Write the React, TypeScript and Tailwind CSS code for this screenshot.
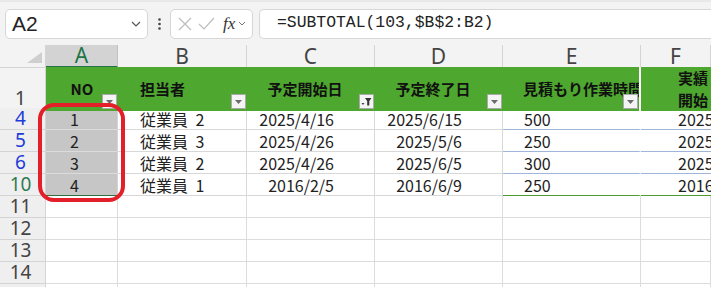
import React from 'react';

const GRID = 'grid grid-cols-[46px_72px_129px_128px_128px_138px_1fr]';
const CJK = "font-['Noto_Sans_CJK_JP',sans-serif]";
const HDR = "font-['Noto_Sans','Liberation_Sans',sans-serif]";

type Row = { n: string; color: string; no: string; who: string; start: string; end: string; est: string; f: string; last?: boolean };

const rows: Row[] = [
  { n: '4', color: 'text-[#1d3bd8]', no: '1', who: '従業員 2', start: '2025/4/16', end: '2025/6/15', est: '500', f: '2025' },
  { n: '5', color: 'text-[#1d3bd8]', no: '2', who: '従業員 3', start: '2025/4/26', end: '2025/5/6', est: '250', f: '2025' },
  { n: '6', color: 'text-[#1d3bd8]', no: '3', who: '従業員 2', start: '2025/4/26', end: '2025/6/5', est: '300', f: '2025' },
  { n: '10', color: 'text-[#2f7d52]', no: '4', who: '従業員 1', start: '2016/2/5', end: '2016/6/9', est: '250', f: '2016', last: true },
];

function FilterBtn({ active }: { active?: boolean }) {
  return (
    <span className="absolute right-[1px] bottom-[2px] w-[15px] h-[15px] bg-[#f4f4f4] border border-[#a9a9a9] flex items-center justify-center">
      {active ? (
        <svg width="11" height="9" viewBox="0 0 11 9">
          <path d="M0.5 6h3L2 8z" fill="#444" />
          <path d="M4 1h6.5L8.3 4v4.5H6.2V4z" fill="#333" />
        </svg>
      ) : (
        <svg width="7" height="4" viewBox="0 0 7 4">
          <path d="M0 0h7L3.5 4z" fill="#6b6b6b" />
        </svg>
      )}
    </span>
  );
}

function Toolbar() {
  return (
    <div className="h-[45px] bg-[#f3f3f3] border-t-[2px] border-[#e8e8e8] flex items-center pl-[5px] gap-0">
      <div className="w-[143px] h-[30px] bg-white border border-[#d6d6d6] rounded-[5px] flex items-center justify-between pl-[6px] pr-[6px]">
        <span className="text-[21px] text-[#222] font-['Liberation_Sans',sans-serif] leading-none">A2</span>
        <svg width="10" height="6" viewBox="0 0 10 6">
          <path d="M1 1l4 4 4-4" stroke="#555" strokeWidth="1.2" fill="none" />
        </svg>
      </div>
      <div className="w-[22px] flex justify-center">
        <svg width="3" height="12" viewBox="0 0 3 12">
          <circle cx="1.5" cy="1.5" r="1.3" fill="#444" />
          <circle cx="1.5" cy="6" r="1.3" fill="#444" />
          <circle cx="1.5" cy="10.5" r="1.3" fill="#444" />
        </svg>
      </div>
      <div className="w-[83px] h-[30px] bg-white border border-[#d6d6d6] rounded-[5px] flex items-center pl-[7px] gap-[6px]">
        <svg width="14" height="14" viewBox="0 0 14 14">
          <path d="M1 1l12 12M13 1L1 13" stroke="#bdbdbd" strokeWidth="1.2" />
        </svg>
        <svg width="17" height="13" viewBox="0 0 17 13">
          <path d="M1 7l5 5L16 1" stroke="#bdbdbd" strokeWidth="1.2" fill="none" />
        </svg>
        <span className="text-[17px] italic text-[#333] font-['Liberation_Serif',serif] leading-none ml-[2px]">fx</span>
        <svg width="8" height="5" viewBox="0 0 8 5" className="-ml-[3px]">
          <path d="M1 1l3 3 3-3" stroke="#777" strokeWidth="1" fill="none" />
        </svg>
      </div>
      <div className="flex-1 ml-[6px] h-[30px] bg-white border border-[#d6d6d6] border-r-0 rounded-l-[5px] flex items-center pl-[17px]">
        <span className="text-[16.4px] text-[#222] font-['Liberation_Mono',monospace] leading-none">=SUBTOTAL(103,$B$2:B2)</span>
      </div>
    </div>
  );
}

export default function App() {
  const letters = ['A', 'B', 'C', 'D', 'E', 'F'];
  const emptyRows = ['11', '12', '13', '14', '15'];

  return (
    <div className="w-[711px] h-[287px] overflow-hidden bg-white relative">
      <Toolbar />

      {/* column letters */}
      <div className={`${GRID} h-[22px] ${HDR}`}>
        <div className="bg-[#f3f3f3] border-r border-b border-[#d4d4d4] relative">
          <svg width="15" height="11" viewBox="0 0 15 11" className="absolute right-[3px] bottom-[4px]">
            <path d="M15 0v11H0z" fill="#cfcfcf" />
          </svg>
        </div>
        {letters.map((l, i) => (
          <div
            key={l}
            className={
              i === 0
                ? 'bg-[#d3d3d3] border-b-2 border-[#217346] border-r border-r-[#c2c2c2] flex items-center justify-center text-[21px] text-[#217346] leading-none'
                : 'bg-[#f3f3f3] border-r border-b border-[#d4d4d4] flex items-center justify-center text-[21px] text-[#444] leading-none'
            }
          >
            {l}
          </div>
        ))}
      </div>

      {/* header row 1 */}
      <div className={`${GRID} h-[41px]`}>
        <div className={`bg-[#f3f3f3] border-r border-b border-[#d4d4d4] flex items-end justify-center pr-[4px] pb-[2px] text-[20px] text-[#444] leading-none ${HDR}`}>1</div>
        <div className={`bg-[#4ea72e] relative flex items-center justify-center text-[15px] font-bold text-[#111] ${CJK}`}>
          NO
          <FilterBtn />
        </div>
        <div className={`bg-[#4ea72e] relative flex items-center pl-[22px] text-[15px] font-bold text-[#111] ${CJK}`}>
          担当者
          <FilterBtn />
        </div>
        <div className={`bg-[#4ea72e] relative flex items-center justify-center pr-[12px] text-[15px] font-bold text-[#111] ${CJK}`}>
          予定開始日
          <FilterBtn active />
        </div>
        <div className={`bg-[#4ea72e] relative flex items-center justify-center pr-[12px] text-[15px] font-bold text-[#111] ${CJK}`}>
          予定終了日
          <FilterBtn />
        </div>
        <div className={`bg-[#4ea72e] relative flex items-center pl-[20px] text-[15px] font-bold text-[#111] border-r-2 border-white whitespace-nowrap overflow-hidden ${CJK}`}>
          見積もり作業時間
          <FilterBtn />
        </div>
        <div className={`bg-[#4ea72e] flex flex-col justify-center pl-[37px] text-[15px] font-bold text-[#111] leading-[22px] ${CJK}`}>
          <span>実績</span>
          <span>開始</span>
        </div>
      </div>

      {/* data rows */}
      {rows.map((r) => {
        const line = r.last ? 'border-b border-[#4f9a35]' : 'border-b border-[#9fb6da]';
        return (
          <div key={r.n} className={`${GRID} h-[22px] text-[16px] text-[#222] leading-none ${CJK}`}>
            <div className={`bg-[#efefef] border-r border-b border-[#d4d4d4] flex items-center justify-center pr-[4px] text-[19px] ${r.color} ${HDR}`}>{r.n}</div>
            <div className={`bg-[#c6c6c6] flex items-center pl-[24px] border-r border-[#d4d4d4] ${r.last ? 'border-b border-b-[#2f6f3e]' : 'border-b border-b-[#dcdcdc]'}`}>{r.no}</div>
            <div className={`flex items-center pl-[22px] [word-spacing:4px] border-r border-[#d8d8d8] ${line}`}>{r.who}</div>
            <div className={`flex items-center justify-end pr-[40px] border-r border-[#d8d8d8] ${line}`}>{r.start}</div>
            <div className={`flex items-center justify-end pr-[40px] border-r border-[#d8d8d8] ${line}`}>{r.end}</div>
            <div className={`flex items-center pl-[21px] border-r-2 border-r-white ${line}`}>{r.est}</div>
            <div className={`flex items-center pl-[37px] ${line}`}>{r.f}</div>
          </div>
        );
      })}

      {/* empty rows */}
      {emptyRows.map((n) => (
        <div key={n} className={`${GRID} h-[22px]`}>
          <div className={`bg-[#efefef] border-r border-b border-[#d4d4d4] flex items-center justify-center pr-[4px] text-[19px] text-[#444] leading-none ${HDR}`}>{n}</div>
          {letters.map((l) => (
            <div key={l} className="border-r border-b border-[#dcdcdc]" />
          ))}
        </div>
      ))}

      {/* annotation */}
      <div className="absolute left-[38px] top-[103px] w-[87px] h-[99px] border-[4px] border-[#e3202a] rounded-[16px] pointer-events-none" />
    </div>
  );
}
